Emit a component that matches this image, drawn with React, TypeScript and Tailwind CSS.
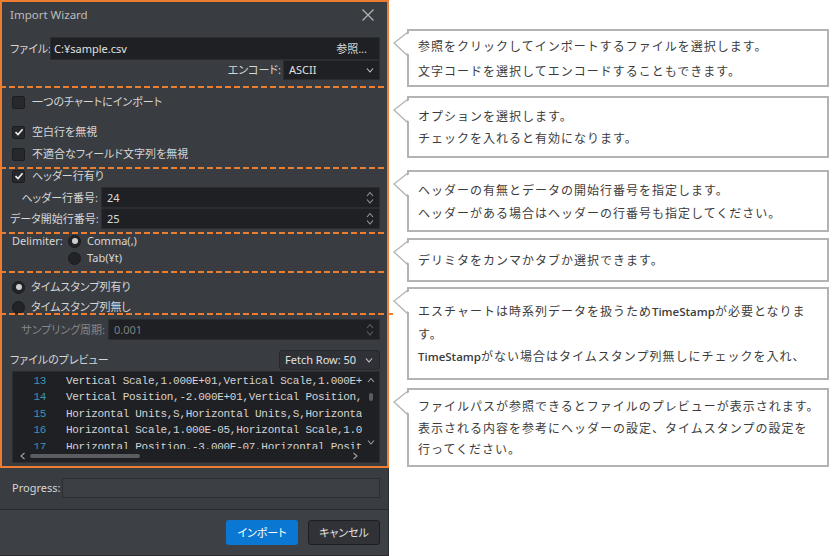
import React from 'react';

type Dir = 'up' | 'down' | 'left' | 'right';

const Chevron = ({ dir, size = 8, color = '#9a9a9a' }: { dir: Dir; size?: number; color?: string }) => {
  const pts: Record<Dir, string> = {
    up: '1,6 4,2.5 7,6',
    down: '1,2.5 4,6 7,2.5',
    left: '5.5,1 2,4 5.5,7',
    right: '2.5,1 6,4 2.5,7',
  };
  return (
    <svg width={size} height={size} viewBox="0 0 8 8" className="block">
      <polyline points={pts[dir]} fill="none" stroke={color} strokeWidth="1.1" />
    </svg>
  );
};

const Checkbox = ({ checked, label, className = '' }: { checked?: boolean; label: string; className?: string }) => (
  <div className={`flex items-center h-[14px] pl-[12px] ${className}`}>
    <div className="w-[13px] h-[13px] rounded-[2px] bg-[#26282c] border border-[#1c1d20] flex items-center justify-center">
      {checked && (
        <svg width="10" height="10" viewBox="0 0 10 10">
          <polyline points="1.5,5.2 4,7.6 8.6,2.2" fill="none" stroke="#f0f0f0" strokeWidth="1.6" />
        </svg>
      )}
    </div>
    <span className="ml-[7px] whitespace-nowrap">{label}</span>
  </div>
);

const Radio = ({ checked }: { checked?: boolean }) => (
  <div className="w-[13px] h-[13px] shrink-0 rounded-full bg-[#222326] border border-[#1a1b1d] flex items-center justify-center">
    {checked && <div className="w-[6px] h-[6px] rounded-full bg-[#cfcfcf]" />}
  </div>
);

const SpinBox = ({ value, disabled }: { value: string; disabled?: boolean }) => (
  <div className="flex-1 h-[21px] bg-[#1f2023] border border-[#2b2d31] flex items-center pl-[5px] pr-[5px]">
    <span className={disabled ? 'text-[#7d7f83]' : 'text-[#dcdcdc]'}>{value}</span>
    <div className="ml-auto flex flex-col items-center -space-y-[1px]">
      <Chevron dir="up" color={disabled ? '#5f6165' : '#9a9a9a'} />
      <Chevron dir="down" color={disabled ? '#5f6165' : '#9a9a9a'} />
    </div>
  </div>
);

const codeLines = [
  ['13', 'Vertical Scale,1.000E+01,Vertical Scale,1.000E+01,Vertical Scale'],
  ['14', 'Vertical Position,-2.000E+01,Vertical Position,-2.000E+01'],
  ['15', 'Horizontal Units,S,Horizontal Units,S,Horizontal Units,S'],
  ['16', 'Horizontal Scale,1.000E-05,Horizontal Scale,1.000E-05'],
  ['17', 'Horizontal Position,-3.000E-07,Horizontal Position,-3.000E-07'],
];

const Callout = ({ lines, className = '' }: { lines: React.ReactNode[]; className?: string }) => (
  <div className={`relative w-[422px] border-2 border-[#b3b3b3] bg-white flex flex-col justify-center pl-[9px] ${className}`}>
    <svg className="absolute left-[-17px] top-0 overflow-visible" width="19" height="30">
      <polygon points="19,1 2,12 19,25" fill="white" />
      <polyline points="16,1 2,12 16,25" fill="none" stroke="#b3b3b3" strokeWidth="1.3" />
    </svg>
    {lines.map((l, i) => (
      <div key={i} className="whitespace-nowrap">
        {l}
      </div>
    ))}
  </div>
);

const TS = () => (
  <span className="tracking-normal font-['Open_Sans',sans-serif] text-[11.5px] font-semibold">TimeStamp</span>
);

const dash = 'absolute left-0 h-[2px] bg-[repeating-linear-gradient(90deg,#ed7d31_0_6px,transparent_6px_9px)]';

export default function App() {
  return (
    <div className="flex w-[832px] h-[556px] bg-white overflow-hidden">
      {/* dialog */}
      <div className="relative w-[389px] h-[556px] shrink-0 bg-[#393c41] border-r border-[#2a2c30] flex flex-col text-[11px] leading-[14px] text-[#d6d6d6] font-['Noto_Sans','Noto_Sans_CJK_JP',sans-serif] [font-feature-settings:'palt'_1]">
        <div className="h-[30px] flex items-center justify-between pl-[10px] pr-[14px]">
          <span className="text-[#bdbdbd] text-[11.5px]">Import Wizard</span>
          <svg width="12" height="12" viewBox="0 0 12 12">
            <path d="M0.5 0.5 L11.5 11.5 M11.5 0.5 L0.5 11.5" stroke="#b4b4b4" strokeWidth="1.2" />
          </svg>
        </div>

        <div className="mt-[7px] h-[23px] flex items-center pl-[10px] pr-[8px]">
          <span className="w-[40px] whitespace-nowrap">ファイル:</span>
          <div className="flex-1 h-full bg-[#1f2023] border border-[#2b2d31] flex items-center pl-[3px] pr-[12px]">
            <span className="text-[#e0e0e0]">C:¥sample.csv</span>
            <span className="ml-auto">参照...</span>
          </div>
        </div>

        <div className="h-[20px] flex items-center justify-end pr-[8px]">
          <span className="mr-[2px] whitespace-nowrap">エンコード:</span>
          <div className="w-[97px] h-full bg-[#1f2023] border border-[#2b2d31] flex items-center pl-[5px] pr-[5px]">
            <span className="text-[#e0e0e0]">ASCII</span>
            <span className="ml-auto">
              <Chevron dir="down" color="#c8c8c8" />
            </span>
          </div>
        </div>

        <Checkbox label="一つのチャートにインポート" className="mt-[15px]" />
        <Checkbox label="空白行を無視" checked className="mt-[16px]" />
        <Checkbox label="不適合なフィールド文字列を無視" className="mt-[8px]" />
        <Checkbox label="ヘッダー行有り" checked className="mt-[8px]" />

        <div className="mt-[4px] flex items-center pl-[10px] pr-[8px]">
          <span className="w-[88px] text-right mr-[3px] whitespace-nowrap">ヘッダー行番号:</span>
          <SpinBox value="24" />
        </div>
        <div className="flex items-center pl-[10px] pr-[8px]">
          <span className="w-[88px] text-right mr-[3px] whitespace-nowrap">データ開始行番号:</span>
          <SpinBox value="25" />
        </div>

        <div className="mt-[5px] h-[14px] flex items-center pl-[12px]">
          <span className="w-[56px] whitespace-nowrap">Delimiter:</span>
          <Radio checked />
          <span className="ml-[6px]">Comma(,)</span>
        </div>
        <div className="mt-[3px] h-[14px] flex items-center pl-[68px]">
          <Radio />
          <span className="ml-[6px]">Tab(¥t)</span>
        </div>

        <div className="mt-[15px] h-[14px] flex items-center pl-[12px]">
          <Radio checked />
          <span className="ml-[6px] whitespace-nowrap">タイムスタンプ列有り</span>
        </div>
        <div className="mt-[6px] h-[14px] flex items-center pl-[12px]">
          <Radio />
          <span className="ml-[6px] whitespace-nowrap">タイムスタンプ列無し</span>
        </div>

        <div className="mt-[5px] flex items-center pl-[10px] pr-[8px]">
          <span className="w-[95px] text-right mr-[3px] text-[#85878b] whitespace-nowrap">サンプリング周期:</span>
          <SpinBox value="0.001" disabled />
        </div>

        <div className="mt-[10px] h-[20px] flex items-center pl-[10px] pr-[8px]">
          <span className="whitespace-nowrap">ファイルのプレビュー</span>
          <div className="ml-auto w-[101px] h-full bg-[#2f3136] border border-[#26282b] rounded-[3px] flex items-center pl-[5px] pr-[6px]">
            <span className="text-[#e0e0e0] whitespace-nowrap">Fetch Row: 50</span>
            <span className="ml-auto">
              <Chevron dir="down" color="#d0d0d0" />
            </span>
          </div>
        </div>

        <div className="mt-[1px] ml-[12px] mr-[8px] h-[92px] bg-[#1f2023] border border-[#2b2d31] flex flex-col">
          <div className="flex h-[77px]">
            <div className="flex-1 overflow-hidden pt-[1px] font-['Liberation_Mono',monospace] text-[11px] tracking-[-0.3px] leading-[16.4px] whitespace-nowrap">
              {codeLines.map(([n, t]) => (
                <div key={n} className="flex">
                  <span className="w-[33px] text-right text-[#3b94b4] shrink-0">{n}</span>
                  <span className="ml-[20px] text-[#d4d4d4]">{t}</span>
                </div>
              ))}
            </div>
            <div className="w-[17px] flex flex-col items-center pt-[4px] pb-[3px]">
              <Chevron dir="up" color="#a0a0a0" />
              <div className="mt-[9px] w-[4px] h-[8px] rounded-full bg-[#5a5c60]" />
              <div className="mt-auto">
                <Chevron dir="down" color="#a0a0a0" />
              </div>
            </div>
          </div>
          <div className="flex-1 flex items-center pl-[6px] pr-[20px]">
            <Chevron dir="left" color="#a0a0a0" />
            <div className="ml-[3px] w-[110px] h-[4px] rounded-full bg-[#5a5c60]" />
            <div className="ml-auto">
              <Chevron dir="right" color="#a0a0a0" />
            </div>
          </div>
        </div>

        <div className="mt-[15px] h-[20px] flex items-center pl-[12px] pr-[8px]">
          <span className="w-[50px] whitespace-nowrap">Progress:</span>
          <div className="flex-1 h-full bg-[#3c3f44] border border-[#2c2e32]" />
        </div>

        <div className="mt-[11px] flex-1 bg-[#3d4045] border-t border-[#27292c] border-b border-b-[#27292c] flex justify-end items-start pt-[10px] pr-[8px] gap-[10px]">
          <div className="w-[72px] h-[25px] rounded-[3px] bg-[#0a78d2] text-white flex items-center justify-center">インポート</div>
          <div className="w-[72px] h-[25px] rounded-[3px] bg-[#303237] border border-[#1d1e21] text-[#e0e0e0] flex items-center justify-center">キャンセル</div>
        </div>

        {/* orange annotation overlay */}
        <div className="absolute left-0 top-0 w-[389px] h-[468px] border-2 border-[#ed7d31] pointer-events-none" />
        <div className={`${dash} w-[389px] top-[86px]`} />
        <div className={`${dash} w-[389px] top-[167px]`} />
        <div className={`${dash} w-[389px] top-[232px]`} />
        <div className={`${dash} w-[389px] top-[271px]`} />
        <div className={`${dash} w-[393px] top-[313px] z-10`} />
      </div>

      {/* annotations */}
      <div className="flex flex-col pt-[29px] pl-[18px] text-[12px] tracking-[1px] text-[#3c3c3c] font-['Noto_Sans_CJK_JP',sans-serif]">
        <Callout
          className="h-[58px] leading-[25px]"
          lines={['参照をクリックしてインポートするファイルを選択します。', '文字コードを選択してエンコードすることもできます。']}
        />
        <Callout
          className="mt-[9px] h-[62px] leading-[22px]"
          lines={['オプションを選択します。', 'チェックを入れると有効になります。']}
        />
        <Callout
          className="mt-[12px] h-[62px] leading-[23px]"
          lines={['ヘッダーの有無とデータの開始行番号を指定します。', 'ヘッダーがある場合はヘッダーの行番号も指定してください。']}
        />
        <Callout className="mt-[6px] h-[44px] leading-[22px]" lines={['デリミタをカンマかタブか選択できます。']} />
        <Callout
          className="mt-[5px] h-[93px] leading-[22px]"
          lines={[
            <>
              エスチャートは時系列データを扱うため
              <TS />
              が必要となりま
            </>,
            'す。',
            <>
              <TS />
              がない場合はタイムスタンプ列無しにチェックを入れ、
            </>,
          ]}
        />
        <Callout
          className="mt-[8px] h-[79px] leading-[21.5px]"
          lines={[
            'ファイルパスが参照できるとファイルのプレビューが表示されます。',
            '表示される内容を参考にヘッダーの設定、タイムスタンプの設定を',
            '行ってください。',
          ]}
        />
      </div>
    </div>
  );
}
